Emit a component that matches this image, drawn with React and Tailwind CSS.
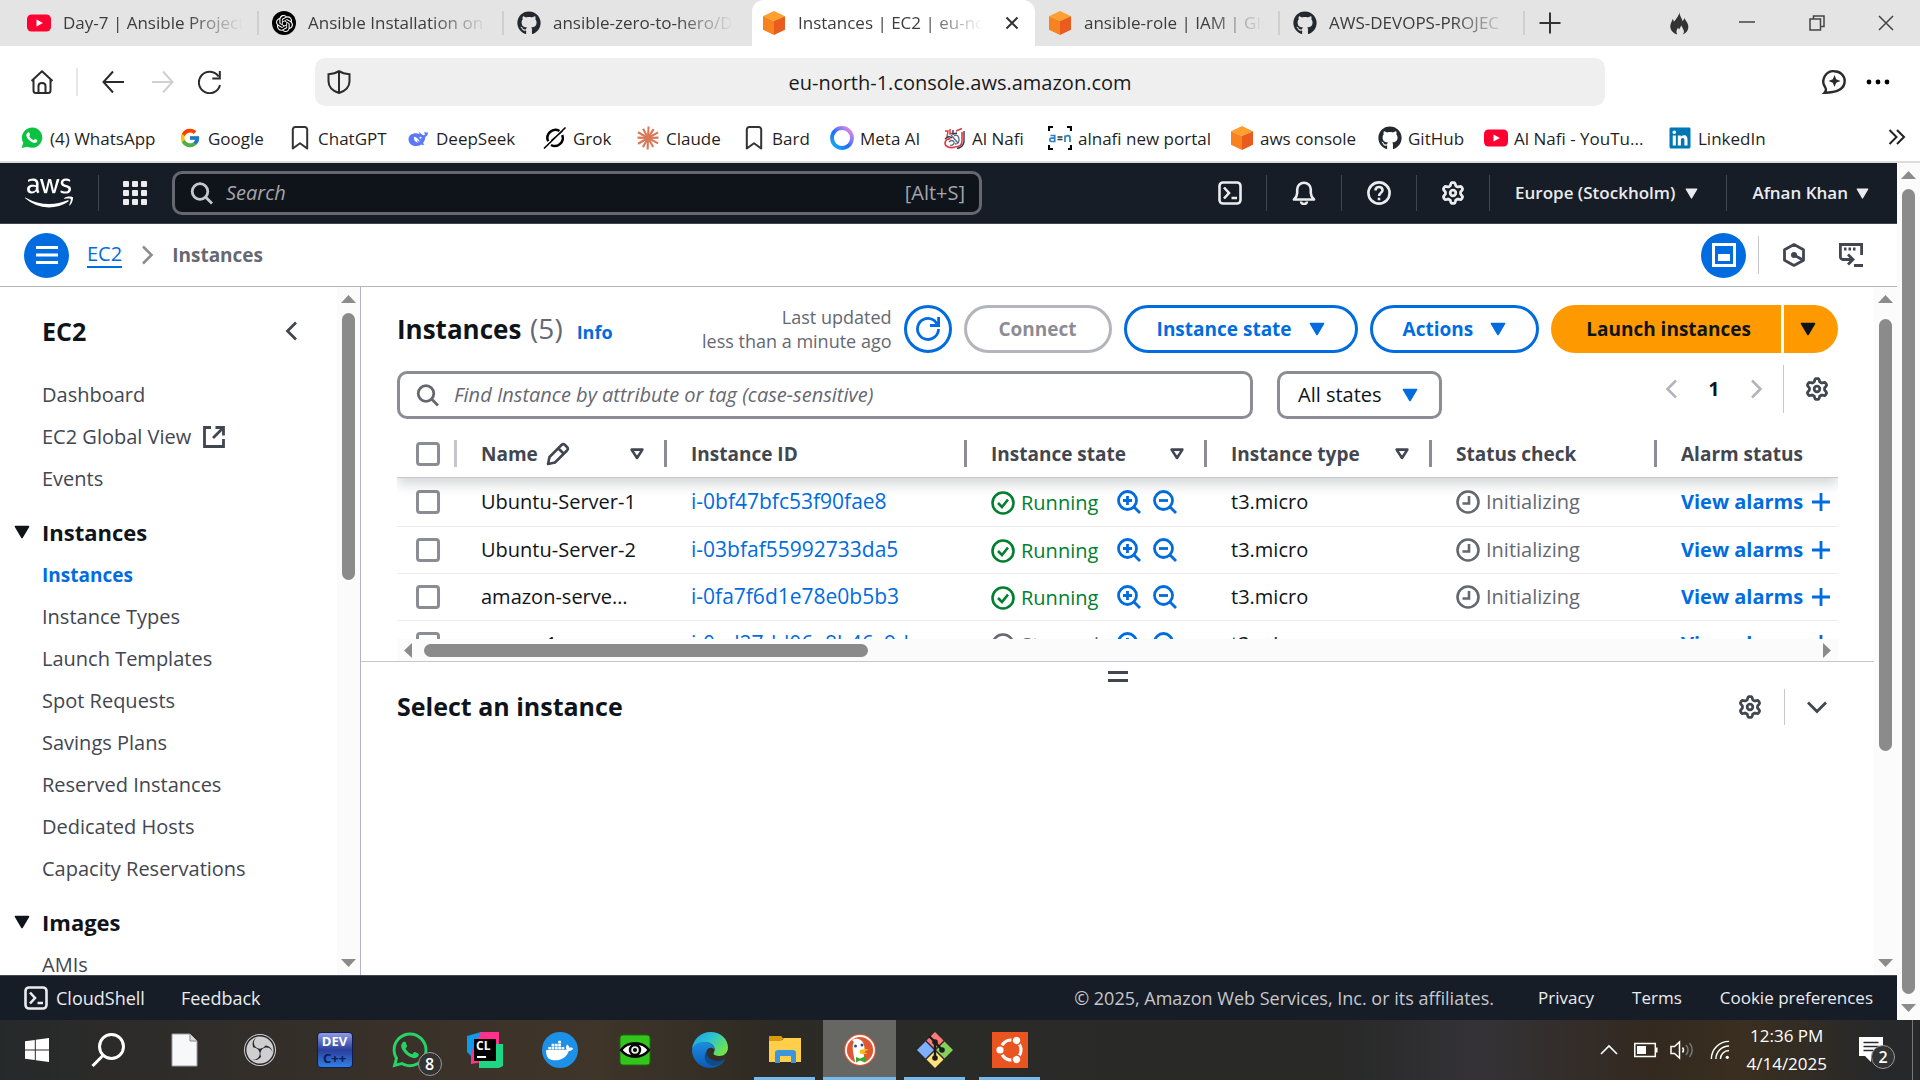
import React from "react";
import { FaGithub, FaWhatsapp, FaLinkedin } from "react-icons/fa";
import { FaAws } from "react-icons/fa6";
import { FcGoogle } from "react-icons/fc";
import { SiOpenai, SiDocker, SiObsstudio } from "react-icons/si";

/* ---------- generic glyphs ---------- */

const Stroke = ({ size = 24, w = 2, className = "", children, box = 24, label }) => (
  <svg width={size} height={size} viewBox={`0 0 ${box} ${box}`} fill="none" stroke="currentColor" strokeWidth={w} className={`shrink-0 ${className}`} aria-label={label} aria-hidden={label ? undefined : true}>
    {children}
  </svg>
);

const Caret = ({ size = 16, className = "" }) => (
  <svg width={size} height={size} viewBox="0 0 16 16" className={`shrink-0 ${className}`} aria-hidden="true">
    <path d="M1.5 2.5h13L8 13.5z" fill="currentColor" stroke="currentColor" strokeWidth="1.6" strokeLinejoin="round" />
  </svg>
);

const SortIcon = () => (
  <Stroke size={16} box={16} w={2.6} className="text-[#424650]">
    <path d="M2.6 3.6h10.8L8 12z" strokeLinejoin="round" />
  </Stroke>
);

const Magnifier = ({ className }) => (
  <Stroke className={className} w={2.8}>
    <circle cx="10" cy="10.5" r="7.8" />
    <path d="M15.5 16l6.5 6.5" />
  </Stroke>
);

const gearPath = (() => {
  let d = "";
  for (let i = 0; i < 72; i++) {
    const a = (i / 72) * Math.PI * 2;
    const r = 9 + 1.5 * Math.tanh(2 * Math.cos(6 * (a - Math.PI / 2)));
    d += `${i ? "L" : "M"}${(12 + r * Math.cos(a)).toFixed(2)} ${(12 + r * Math.sin(a)).toFixed(2)}`;
  }
  return d + "Z";
})();

const Gear = ({ className }) => (
  <Stroke className={className} w={2.8}>
    <path d={gearPath} strokeLinejoin="round" />
    <circle cx="12" cy="12" r="2.8" />
  </Stroke>
);

const ShellIcon = ({ className }) => (
  <Stroke className={className} w={2.6}>
    <rect x="1.5" y="1.5" width="21" height="21" rx="3.5" />
    <path d="M6 6.5l5 5.5-5 5.5M13.5 17h5.5" />
  </Stroke>
);

const Chevron = ({ d, size = 20, w = 2.6, className }) => (
  <Stroke size={size} box={20} w={w} className={className}>
    <path d={d} />
  </Stroke>
);
const LEFT = "M14 1.5L5.5 10l8.5 8.5";
const RIGHT = "M6 1.5L14.5 10 6 18.5";
const DOWN = "M1 5.5l9 9 9-9";

/* ---------- site logos ---------- */

const YouTubeLogo = () => (
  <svg width="24" height="24" viewBox="0 0 24 24" className="shrink-0" aria-hidden="true">
    <rect y="3.5" width="24" height="17" rx="4.5" fill="#ff0033" />
    <path d="M9.5 8.4l6.4 3.6-6.4 3.6z" fill="#fff" />
  </svg>
);

const CubeLogo = () => (
  <svg width="24" height="24" viewBox="0 0 24 24" className="shrink-0" aria-hidden="true">
    <path d="M12 0l11 5.2L12 10 1 5.2z" fill="#ff9f2e" />
    <path d="M1 5.2L12 10v14L1 18.8z" fill="#f78220" />
    <path d="M23 5.2L12 10v14l11-5.2z" fill="#e95c1e" />
  </svg>
);

const OpenAiLogo = () => (
  <span className="flex size-6 shrink-0 items-center justify-center rounded-full bg-black text-white">
    <SiOpenai size={17} />
  </span>
);

const WhatsAppLogo = () => (
  <svg width="24" height="24" viewBox="0 0 24 24" className="shrink-0" aria-hidden="true">
    <path d="M1.5 22l1.8-5.2A10.2 10.2 0 1 1 7.4 20.700z" fill="#0dc143" />
    <path d="M8.600 6.300c.5 0 .7.3 1.500 2.300.1.500-.9 1.300-.8 1.700 1 1.900 2.300 3 4.200 3.800.5.2 1.200-1.400 1.700-1.200 2 .9 2.300 1.100 2.300 1.400-.1 1.900-1.600 2.700-3 2.700-3.300-.3-7.800-4.200-8.200-7.700 0-1.500 1-3 2.300-3z" fill="#fff" />
  </svg>
);

const BookmarkGlyph = () => (
  <Stroke w={2} className="text-[#333]">
    <path d="M4.800 3.500a2.500 2.500 0 0 1 2.500-2.500h9.400a2.500 2.500 0 0 1 2.500 2.500v19l-7.200-5.300-7.200 5.300z" strokeLinejoin="round" />
  </Stroke>
);

const DeepSeekLogo = () => (
  <svg width="24" height="24" viewBox="0 0 24 24" className="shrink-0" aria-hidden="true">
    <path d="M22 6.200c-1.500.8-2.500.4-3.300-.8-.5 1.500-.3 2.400.5 3.400-1 .6-2 .5-3.200-.3-1.300-1-2-2.200-3.400-2.300.3.900.7 1.300 1.400 2C9 5.800 2.500 8 2.500 13.200c0 4 3.300 6.800 7.200 6.800 2.300 0 4-.5 5.500-1.500 1 .6 2 .5 3.300 0-.7-.3-1.300-.8-1.500-1.400 1.700-2 2.200-4 2.300-6.300 1.700-.6 2.600-2.100 2.700-4.600z" fill="#5b78f6" />
    <path d="M8 10.800c2.700.3 4.800 2.300 6 5.200-1.200-.3-2-.9-2.700-1.700-.3 1.300.2 1.900 1 2.500-3-.4-4.800-2.900-4.300-6z" fill="#fff" />
    <circle cx="14.500" cy="11.800" r="1" fill="#fff" />
  </svg>
);

const GrokLogo = () => (
  <Stroke w={2.500} className="text-black">
    <path d="M16.500 5A8 8 0 0 0 5.200 15.300M8 19A8 8 0 0 0 19.200 9" />
    <path d="M1 22.500L22.500 1.500M8.500 14.500L19.500 5" strokeWidth="1.600" />
  </Stroke>
);

const ClaudeLogo = () => (
  <svg width="24" height="24" viewBox="0 0 24 24" className="shrink-0" aria-hidden="true">
    {[3, 32, 61, 88, 118, 150, 182, 209, 240, 272, 300, 332].map((a, i) => (
      <path key={a} d={i % 2 ? "M12 12V1.500" : "M12 12V.5"} stroke="#d97757" strokeWidth="2.100" transform={`rotate(${a} 12 12)`} />
    ))}
  </svg>
);

const MetaLogo = () => (
  <svg width="24" height="24" viewBox="0 0 24 24" className="shrink-0" aria-hidden="true">
    <defs>
      <linearGradient id="meta-ring" x1="0" y1="1" x2="1" y2="0">
        <stop offset="0" stopColor="#12b5f5" />
        <stop offset=".45" stopColor="#1f6cf5" />
        <stop offset=".7" stopColor="#8d7cf7" />
        <stop offset="1" stopColor="#ff8ad0" />
      </linearGradient>
    </defs>
    <circle cx="12" cy="12" r="10" fill="none" stroke="url(#meta-ring)" strokeWidth="3.800" />
  </svg>
);

const AlNafiLogo = () => (
  <svg width="24" height="24" viewBox="0 0 24 24" className="shrink-0" fill="none" aria-hidden="true">
    <path d="M3 5h3l-1 6M8 3v5l3-1M14 5l6-2.500" stroke="#e0393e" strokeWidth="1.500" />
    <path d="M20 6v9c0 4-3 6-7 6-5 1.500-10 0-10-4 0-3 3-4.500 5.500-4" stroke="#e0393e" strokeWidth="1.600" />
    <path d="M22 5v11c-1 4-3 6-7 6.500M3 13c3-3 5-3 7-1M11 4v4l4-1" stroke="#2b3a5c" strokeWidth="1.400" />
    <path d="M12 10c3-2 5 0 5 4s-2 4-4 4M9 9l7 8M7 16c2-2 4-2 5 0s-2 4-4 3" stroke="#59657d" strokeWidth="1.300" />
  </svg>
);

const PortalLogo = () => (
  <svg width="24" height="24" viewBox="0 0 24 24" fill="none" className="shrink-0" aria-hidden="true">
    <path d="M1 5V1h4M19 1h4v4M1 19v4h4M23 19v4h-3" stroke="#000" strokeWidth="2.200" />
    <path d="M2.500 9.500h4.200v6H3.500a1.500 1.500 0 0 1 0-3.300h3M17 16V9.500M17 11.500c1.500-2.500 5-2.500 5 .5v4" stroke="#2f7fc1" strokeWidth="1.700" />
    <path d="M9.500 11h5M9.500 13.500h5" stroke="#333" strokeWidth="1.500" />
  </svg>
);

/* ---------- browser chrome ---------- */

const tabs = [
  { icon: <YouTubeLogo />, title: "Day-7 | Ansible Project" },
  { icon: <OpenAiLogo />, title: "Ansible Installation on" },
  { icon: <FaGithub size={24} className="shrink-0 text-[#24292f]" />, title: "ansible-zero-to-hero/D" },
  { icon: <CubeLogo />, title: "Instances | EC2 | eu-nort", active: true },
  { icon: <CubeLogo />, title: "ansible-role | IAM | Glo" },
  { icon: <FaGithub size={24} className="shrink-0 text-[#24292f]" />, title: "AWS-DEVOPS-PROJEC" },
];

function TabStrip() {
  return (
    <div className="flex h-[46px] shrink-0 items-center bg-[#e4e4e4] pl-3.5 text-[#3c3c3c]">
      {tabs.map((t, i) => (
        <button
          key={t.title}
          className={
            t.active
              ? "ml-[3px] flex h-full w-[283px] items-center gap-3 rounded-t-xl bg-white pr-4 pl-2.5"
              : "relative flex h-full w-[245px] items-center gap-3 pr-[16px] pl-[13px]"
          }
        >
          {t.icon}
          <span className="flex-1 overflow-hidden text-left text-[17px] whitespace-nowrap [mask-image:linear-gradient(to_right,black_68%,transparent_100%)]">
            {t.title}
          </span>
          {t.active && (
            <Stroke size={14} box={14} w={2} className="ml-2.5 text-[#333]">
              <path d="M1.500 1.500l11 11M12.500 1.500l-11 11" />
            </Stroke>
          )}
          {!t.active && i !== 2 && <span className="absolute right-0 h-6 w-0.5 bg-[#cfcfcf]" />}
        </button>
      ))}
      <button aria-label="New tab" className="ml-3.5">
        <Stroke size={22} box={22} className="text-[#333]"><path d="M11 .5v21M.5 11h21" /></Stroke>
      </button>
      <div className="ml-auto flex items-center">
        <button aria-label="Clear data" className="flex w-16 justify-center">
          <svg width="22" height="26" viewBox="0 0 24 26" aria-hidden="true">
            <path d="M13 0c-1.500 4 2.200 7.500 3 11 1-.8 1.500-2 1.500-3.500 3 4 5.500 7.500 4.500 11.500-.8 3.500-3 5.500-6 6.500 1.300-1.500 1.800-3.200 1-5-.7-1.800-2-3-2.500-5-1 2-1.200 3-2.500 4.500-.6-.6-.8-1.300-.8-2-1.800 2-2.700 4.500-1.200 7.500-4-1.300-7-4-7.500-8-.4-3.300 1.500-5.500 2.500-9 .8 1 1.200 1.800 1.500 3C9.500 8 12 5 13 0z" fill="#333" />
          </svg>
        </button>
        <button aria-label="Minimize" className="flex w-[72px] justify-center">
          <Stroke size={16} box={16} w={1.500} className="text-[#444]"><path d="M0 7h16" /></Stroke>
        </button>
        <button aria-label="Restore" className="flex w-[68px] justify-center">
          <Stroke size={16} box={16} w={1.500} className="text-[#444]"><path d="M1 4h10.500v11H1zM4.500 4V1H15v10.500h-3.500" /></Stroke>
        </button>
        <button aria-label="Close" className="flex w-[69px] justify-center">
          <Stroke size={16} box={16} w={1.500} className="text-[#444]"><path d="M1 1l14 14M15 1L1 15" /></Stroke>
        </button>
      </div>
    </div>
  );
}

function AddressBar() {
  return (
    <div className="flex h-[72px] shrink-0 items-center bg-white text-[#2b2b2b]">
      <div className="flex w-[315px] shrink-0 items-center pl-[30px]">
        <button aria-label="Home">
          <Stroke><path d="M1.500 11L12 1.200 22.500 11M3.500 9.500v11a2.500 2.500 0 0 0 2.500 2.500h12a2.500 2.500 0 0 0 2.500-2.500v-11M8.500 22.500V16c0-2 1-3 3.500-3s3.500 1 3.500 3v6.500" strokeLinejoin="round" /></Stroke>
        </button>
        <span className="mr-6 ml-[22px] h-7 w-0.5 bg-[#e6e6e6]" />
        <button aria-label="Back">
          <Stroke><path d="M22 12H2M11 1.500L1.500 12l9.500 10.500" /></Stroke>
        </button>
        <button aria-label="Forward" className="ml-6 text-[#d0d0d0]">
          <Stroke><path d="M2 12h20M13 1.500l9.500 10.500L13 22.500" /></Stroke>
        </button>
        <button aria-label="Reload" className="ml-6">
          <Stroke><path d="M20.500 6.500A10.700 10.700 0 1 0 22 15M21.800 1v7.500h-7.500" /></Stroke>
        </button>
      </div>
      <div className="flex h-12 flex-1 items-center rounded-[10px] bg-[#efefef] pr-9 pl-3">
        <Stroke><path d="M12 1.200c3 2 6.500 2.800 10.500 3v7C22.500 17 18 21 12 23 6 21 1.500 17 1.500 11.200v-7C5.500 4 9 3.200 12 1.200zM12 1.200V23" /></Stroke>
        <input aria-label="Address" defaultValue="eu-north-1.console.aws.amazon.com" className="w-full bg-transparent pt-0.5 text-center text-[20px] text-[#1a1a1a] outline-none" />
      </div>
      <div className="flex w-[315px] shrink-0 items-center justify-end gap-5 pr-[30px]">
        <button aria-label="Chat">
          <Stroke w={2.400}>
            <path d="M12.500 1.200a10.300 9.800 0 0 1 10.200 9.800C22.700 18 16 22.500 2.500 22.800c1.800-2 2-3.300.8-5.300A10.300 10.300 0 0 1 12.500 1.200z" />
            <path d="M12.500 5l1.700 4.300 4.300 1.700-4.300 1.700-1.700 4.300-1.700-4.300L6.500 11l4.300-1.700z" fill="currentColor" stroke="none" />
          </Stroke>
        </button>
        <button aria-label="More">
          <svg width="24" height="6" viewBox="0 0 24 6" aria-hidden="true"><circle cx="3" cy="3" r="2.400" /><circle cx="12" cy="3" r="2.400" /><circle cx="21" cy="3" r="2.400" /></svg>
        </button>
      </div>
    </div>
  );
}

const bookmarks = [
  [<WhatsAppLogo />, "(4) WhatsApp", "w-[158px]"],
  [<span className="flex w-6 shrink-0 justify-center"><FcGoogle size={22} /></span>, "Google", "w-[110px]"],
  [<BookmarkGlyph />, "ChatGPT", "w-[118px]"],
  [<DeepSeekLogo />, "DeepSeek", "w-[137px]"],
  [<GrokLogo />, "Grok", "w-[93px]"],
  [<ClaudeLogo />, "Claude", "w-[106px]"],
  [<BookmarkGlyph />, "Bard", "w-[88px]"],
  [<MetaLogo />, "Meta AI", "w-[112px]"],
  [<AlNafiLogo />, "Al Nafi", "w-[106px]"],
  [<PortalLogo />, "alnafi new portal", "w-[182px]"],
  [<CubeLogo />, "aws console", "w-[148px]"],
  [<FaGithub size={24} className="shrink-0 text-[#24292f]" />, "GitHub", "w-[106px]"],
  [<YouTubeLogo />, "Al Nafi - YouTu...", "w-[184px]"],
  [<span className="flex w-6 shrink-0 justify-center"><FaLinkedin size={24} className="text-[#0077b5]" /></span>, "LinkedIn", "w-[106px]"],
];

function BookmarkBar() {
  return (
    <nav aria-label="Bookmarks" className="flex h-[45px] shrink-0 items-start border-b-2 border-[#dcdcdc] bg-white pt-2 pl-5">
      {bookmarks.map(([icon, label, width]) => (
        <a key={label} href="#" className={`flex h-6 items-center gap-1.5 text-[17px] whitespace-nowrap text-[#1f1f1f] ${width}`}>
          {icon}
          <span className="pt-0.5">{label}</span>
        </a>
      ))}
      <button aria-label="More bookmarks" className="mt-0.5 mr-3.5 ml-auto">
        <Stroke size={18} box={18} className="text-[#222]"><path d="M1.500 2l7 7-7 7M9 2l7 7-7 7" /></Stroke>
      </button>
    </nav>
  );
}

/* ---------- AWS console ---------- */

const HSep = () => <span className="block h-9 w-px shrink-0 bg-[#424650]" />;

function AwsHeader() {
  return (
    <header className="flex h-[61px] shrink-0 items-center border-b border-[#424650] bg-[#161d26] text-[17px] font-semibold text-[#ebebf0]">
      <button aria-label="AWS home" className="mr-[25px] ml-[25px]"><FaAws size={48} className="text-white" /></button>
      <HSep />
      <button aria-label="Services" className="ml-6">
        <svg width="24" height="24" viewBox="0 0 24 24" fill="currentColor" aria-hidden="true">
          {[0, 9, 18].map((y) => [0, 9, 18].map((x) => <rect key={`${x}-${y}`} x={x} y={y} width="6" height="6" rx="1" />))}
        </svg>
      </button>
      <div className="ml-[25px] flex h-11 w-full max-w-[810px] items-center gap-3 rounded-[10px] border-[3px] border-[#656871] bg-[#0f141a] pr-3.5 pl-[15px]">
        <Magnifier className="text-[#c6c6cd]" />
        <input type="search" aria-label="Search" placeholder="Search" className="min-w-0 flex-1 bg-transparent text-[20px] font-normal outline-none placeholder:text-[#a4a4ad] placeholder:italic" />
        <span className="text-[20px] font-normal text-[#a4a4ad]">[Alt+S]</span>
      </div>
      <div className="ml-auto flex h-full items-center">
        <button aria-label="CloudShell" className="px-6"><ShellIcon /></button>
        <HSep />
        <button aria-label="Notifications" className="px-[25px]">
          <Stroke w={2.600}><path d="M2 18.500h20c-2-2-3.200-3.800-3.200-6.500V8.500a6.800 6.800 0 0 0-13.600 0V12c0 2.700-1.200 4.500-3.200 6.500zM9 20.500a3 2.500 0 0 0 6 0" strokeLinejoin="round" /></Stroke>
        </button>
        <HSep />
        <button aria-label="Help" className="px-[25px]">
          <Stroke w={2.600}><circle cx="12" cy="12" r="10.600" /><path d="M8.500 9.500C8.500 7 10 6 12 6s3.500 1.200 3.500 3.200C15.500 11.800 12 12 12 15M12 16.800v2.400" /></Stroke>
        </button>
        <HSep />
        <button aria-label="Settings" className="px-6"><Gear /></button>
        <HSep />
        <button className="flex items-center gap-2.5 pr-7 pl-[25px] whitespace-nowrap">Europe (Stockholm) <Caret size={13} /></button>
        <HSep />
        <button className="flex items-center gap-2 pr-7 pl-[25px] whitespace-nowrap">Afnan Khan <Caret size={13} /></button>
      </div>
    </header>
  );
}

function Breadcrumbs() {
  return (
    <div className="flex h-[63px] shrink-0 items-center border-b border-[#b4b4bb] bg-white px-6">
      <button aria-label="Open navigation" className="flex size-[45px] items-center justify-center rounded-full bg-[#006ce0] text-white">
        <Stroke size={22} box={22} w={3}><path d="M0 3.500h22M0 11h22M0 18.500h22" /></Stroke>
      </button>
      <a href="#" className="ml-[18px] border-b-2 border-[#006ce0] text-[20px] leading-6 text-[#006ce0]">EC2</a>
      <Chevron d={RIGHT} className="mx-[15px] text-[#8c8c94]" />
      <span className="text-[19px] font-bold text-[#656871]">Instances</span>
      <div className="ml-auto flex items-center">
        <button aria-label="Split panel" className="flex size-[45px] items-center justify-center rounded-full bg-[#006ce0] text-white">
          <Stroke w={3}><rect x="1.500" y="1.500" width="21" height="21" /><path d="M6 11h12v7H6z" fill="currentColor" stroke="none" /></Stroke>
        </button>
        <span className="ml-3 h-[38px] w-px bg-[#c6c6cd]" />
        <button aria-label="Amazon Q" className="ml-[23px] text-[#424650]">
          <Stroke w={2.800}><path d="M12 1.600l9.500 5.200v10.400L12 22.400l-9.500-5.200V6.800z" strokeLinejoin="round" /><circle cx="12" cy="12" r="3" fill="currentColor" stroke="none" /><path d="M12 12l8 4.500" /></Stroke>
        </button>
        <button aria-label="Shell panel" className="mr-2.5 ml-[33px] text-[#424650]">
          <Stroke w={2.800}>
            <path d="M7 16.500H4a2.500 2.500 0 0 1-2.600-2.500V1.500h21.200V12M15 22.500h9M5 16.500h8M9 11.500l5 5-5 5" />
            <path d="M5 6h2.500M9.500 6H12M14 6h2.500" />
          </Stroke>
        </button>
      </div>
    </div>
  );
}

const ScrollBar = ({ children, className = "" }) => (
  <div aria-hidden="true" className={`flex w-[23px] shrink-0 flex-col items-center bg-[#fbfbfb] py-2 ${className}`}>
    <svg width="15" height="8" viewBox="0 0 15 8" className="shrink-0"><path d="M7.500 0L15 8H0z" fill="#8b8b8b" /></svg>
    <div className="flex min-h-0 w-full flex-1 justify-center pt-2.5 pb-2.5">{children}</div>
    <svg width="15" height="8" viewBox="0 0 15 8" className="shrink-0"><path d="M7.500 8L15 0H0z" fill="#8b8b8b" /></svg>
  </div>
);

const ExternalIcon = () => (
  <Stroke size={22} box={22} w={2.800} className="text-[#424650]">
    <path d="M8 1.500H1.500v19h19V13M12.500 1.500h8v8M20.500 1.500L10 12" />
  </Stroke>
);

const NavItem = ({ children, active }) => (
  <li className={`flex h-[42px] items-center gap-3 ${active ? "font-bold text-[#006ce0]" : "text-[#424650]"}`}>
    <a href="#" className={active ? "text-[19px]" : "text-[20px]"}>{children}</a>
    {children === "EC2 Global View" && <ExternalIcon />}
  </li>
);

const NavSection = ({ title, items, active }) => (
  <section>
    <h3 className="flex h-11 items-center gap-3 pl-3.5 text-[22px] font-bold text-[#0f141a]">
      <Caret size={16} />
      {title}
    </h3>
    <ul className="pl-[42px]">
      {items.map((t) => <NavItem key={t} active={t === active}>{t}</NavItem>)}
    </ul>
  </section>
);

function Sidebar() {
  return (
    <aside className="flex w-[361px] shrink-0 border-r border-[#b4b4bb] bg-white">
      <nav aria-label="EC2" className="min-h-0 flex-1 overflow-hidden">
        <div className="flex items-center justify-between pt-[26px] pr-[35px] pb-[25px] pl-[42px]">
          <h2 className="text-[25px] leading-9 font-bold text-[#0f141a]">EC2</h2>
          <button aria-label="Close navigation"><Chevron d={LEFT} className="text-[#424650]" w={2.800} /></button>
        </div>
        <div className="flex flex-col gap-2.5">
          <ul className="pl-[42px]">
            {["Dashboard", "EC2 Global View", "Events"].map((t) => <NavItem key={t}>{t}</NavItem>)}
          </ul>
          <NavSection
            title="Instances"
            active="Instances"
            items={["Instances", "Instance Types", "Launch Templates", "Spot Requests", "Savings Plans", "Reserved Instances", "Dedicated Hosts", "Capacity Reservations"]}
          />
          <NavSection title="Images" items={["AMIs"]} />
        </div>
      </nav>
      <ScrollBar>
        <span className="h-[42%] w-[13px] rounded-full bg-[#8b8b8b]" />
      </ScrollBar>
    </aside>
  );
}

const OutlineButton = ({ children, disabled, caret }) => (
  <button
    disabled={disabled}
    className={`flex h-12 items-center gap-[17px] rounded-full border-[3px] text-[19px] font-bold whitespace-nowrap ${disabled ? "border-[#b4b4bb] px-8 text-[#8c8c94]" : "border-[#006ce0] px-[30px] text-[#006ce0]"}`}
  >
    {children}
    {caret && <Caret size={16} />}
  </button>
);

const PanelSep = () => <span className="block h-12 w-px bg-[#c6c6cd]" />;

function InstancesHeader() {
  return (
    <>
      <div className="flex items-center justify-between pt-[18px]">
        <div className="-mt-0.5 flex items-baseline">
          <h1 className="text-[26px] leading-9 font-bold text-[#0f141a]">
            Instances <span className="ml-0.5 text-[28px] font-normal text-[#656871]">(5)</span>
          </h1>
          <a href="#" className="ml-3.5 text-[18px] font-bold text-[#006ce0]">Info</a>
        </div>
        <div className="flex items-center gap-3">
          <p className="text-right text-[18px] leading-6 text-[#656871]">Last updated<br />less than a minute ago</p>
          <button aria-label="Refresh" className="flex size-12 items-center justify-center rounded-full border-[3px] border-[#006ce0] text-[#006ce0]">
            <Stroke w={2.800}><path d="M22.500 12a10.500 10.500 0 1 1-4-8.300L22 8M22.600 0v8.500H14" /></Stroke>
          </button>
          <OutlineButton disabled>Connect</OutlineButton>
          <OutlineButton caret>Instance state</OutlineButton>
          <OutlineButton caret>Actions</OutlineButton>
          <div className="flex gap-[3px] text-[19px] font-bold text-[#0f141a]">
            <button className="h-12 rounded-l-full bg-[#ff9900] pr-[30px] pl-[35px] whitespace-nowrap">Launch instances</button>
            <button aria-label="More launch options" className="flex h-12 w-[54px] items-center rounded-r-full bg-[#ff9900] pl-4"><Caret size={16} /></button>
          </div>
        </div>
      </div>
      <div className="mt-[18px] flex items-center">
        <div className="flex h-12 w-full max-w-[856px] items-center gap-3.5 rounded-[10px] border-[3px] border-[#8c8c94] px-4">
          <Magnifier className="text-[#656871]" />
          <input type="search" aria-label="Find Instance" placeholder="Find Instance by attribute or tag (case-sensitive)" className="w-full bg-transparent text-[20px] text-[#0f141a] outline-none placeholder:text-[#656871] placeholder:italic" />
        </div>
        <div className="relative ml-6 shrink-0">
          <select aria-label="Instance state filter" className="h-12 w-[165px] appearance-none rounded-[10px] border-[3px] border-[#8c8c94] bg-white pl-[18px] text-[20px] text-[#0f141a]">
            <option>All states</option>
          </select>
          <Caret size={16} className="pointer-events-none absolute top-4 right-6 text-[#006ce0]" />
        </div>
        <div className="-mt-3 ml-auto flex items-center pr-[9px]">
          <button aria-label="Previous page"><Chevron d={LEFT} className="text-[#b4b4bb]" /></button>
          <button aria-current="page" className="mx-[22px] w-5 text-[19px] font-bold text-[#0f141a]">1</button>
          <button aria-label="Next page" className="mr-[17px]"><Chevron d={RIGHT} className="text-[#b4b4bb]" /></button>
          <PanelSep />
          <button aria-label="Preferences" className="ml-[21px]"><Gear className="text-[#424650]" /></button>
        </div>
      </div>
    </>
  );
}

const CheckCircle = () => (
  <Stroke w={2.600} className="text-[#00802f]"><circle cx="12" cy="12" r="10.500" /><path d="M7 12l4 4 6-7.500" /></Stroke>
);
const StopCircle = () => (
  <Stroke w={2.600}><circle cx="12" cy="12" r="10.500" /><path d="M7 12h10" /></Stroke>
);
const ClockCircle = () => (
  <Stroke w={2.600}><circle cx="12" cy="12" r="10.500" /><path d="M13 6v7.500H6.500" /></Stroke>
);
const Zoom = ({ d, label }) => (
  <button aria-label={label} className="text-[#006ce0]">
    <Stroke w={2.800}><circle cx="10.500" cy="10.500" r="9" /><path d="M17 17l6 6" /><path d={d} /></Stroke>
  </button>
);

const rows = [
  { name: "Ubuntu-Server-1", id: "i-0bf47bfc53f90fae8", state: "Running", check: "Initializing" },
  { name: "Ubuntu-Server-2", id: "i-03bfaf55992733da5", state: "Running", check: "Initializing" },
  { name: "amazon-serve…", id: "i-0fa7f6d1e78e0b5b3", state: "Running", check: "Initializing" },
  { name: "server-1", id: "i-0ad27dd06a8b46c9d", state: "Stopped", check: "" },
];

const columns = [
  { title: "Name", width: "w-[210px]", edit: true, sort: true },
  { title: "Instance ID", width: "w-[300px]" },
  { title: "Instance state", width: "w-[240px]", sort: true },
  { title: "Instance type", width: "w-[225px]", sort: true },
  { title: "Status check", width: "w-[225px]" },
  { title: "Alarm status", last: true },
];

const Check = ({ label }) => (
  <input type="checkbox" aria-label={label} className="block size-6 appearance-none rounded-[4px] border-[3px] border-[#8c8c94] bg-white checked:bg-[#006ce0]" />
);

function InstancesTable() {
  return (
    <div className="mt-[11px] h-[209px] overflow-hidden">
      <table className="w-full table-fixed border-separate border-spacing-0 text-left text-[20px] text-[#0f141a]">
        <thead className="relative shadow-[0_6px_12px_rgba(0,28,36,0.18)]">
          <tr className="h-12">
            <th className="w-[60px] border-b border-[#c6c6cd] p-0">
              <div className="flex h-[27px] items-center justify-between pl-[19px]">
                <Check label="Select all instances" />
                <span className="h-[27px] w-[3px] bg-[#c6c6cd]" />
              </div>
            </th>
            {columns.map((c) => (
              <th key={c.title} className={`border-b border-[#c6c6cd] p-0 text-[19px] font-bold text-[#424650] ${c.width || ""}`}>
                <div className="flex h-[27px] items-center pl-6 whitespace-nowrap">
                  <span className="pt-0.5">{c.title}</span>
                  {c.edit && (
                    <Stroke w={2.600} className="ml-2">
                      <path d="M2 22l1.500-7L15.500 3a2.500 2.500 0 0 1 3.500 0l2 2a2.500 2.500 0 0 1 0 3.500L9 20.500zM12.500 6.500l5 5" strokeLinejoin="round" />
                    </Stroke>
                  )}
                  <span className="ml-auto flex items-center gap-[19px]">
                    {c.sort && <SortIcon />}
                    {!c.last && <span className="h-[27px] w-[3px] bg-[#8c8c94]" />}
                  </span>
                </div>
              </th>
            ))}
          </tr>
        </thead>
        <tbody className="[&_td]:border-b [&_td]:border-[#ebebf0] [&_td]:p-0 [&_td]:whitespace-nowrap">
          {rows.map((r, i) => (
            <tr key={r.id} className={i === 0 ? "h-[49px]" : "h-[47px]"}>
              <td><div className="pl-[19px]"><Check label={`Select ${r.name}`} /></div></td>
              <td><div className="pl-6">{r.name}</div></td>
              <td><a href="#" className="pl-6 text-[21px] text-[#006ce0]">{r.id}</a></td>
              <td>
                <div className="flex items-center pl-6">
                  <span className={`flex w-[126px] items-center gap-1.5 pt-0.5 ${r.state === "Running" ? "text-[#00802f]" : "text-[#656871]"}`}>
                    {r.state === "Running" ? <CheckCircle /> : <StopCircle />}
                    {r.state}
                  </span>
                  <span className="flex gap-3">
                    <Zoom label="Filter in" d="M10.500 6v9M6 10.500h9" />
                    <Zoom label="Filter out" d="M6 10.500h9" />
                  </span>
                </div>
              </td>
              <td><div className="pl-6">t3.micro</div></td>
              <td>
                {r.check && <div className="flex items-center gap-1.5 pl-6 text-[#656871]"><ClockCircle />{r.check}</div>}
              </td>
              <td>
                <a href="#" className="flex items-center gap-2 pl-6 text-[20px] font-bold text-[#006ce0]">
                  View alarms
                  <Stroke size={20} box={20} w={2.800}><path d="M10 1v18M1 10h18" /></Stroke>
                </a>
              </td>
            </tr>
          ))}
        </tbody>
      </table>
    </div>
  );
}

function SplitPanel() {
  return (
    <section className="flex-1 border-t border-[#c6c6cd] bg-white">
      <button aria-label="Resize panel" className="mx-auto mt-[9px] block text-[#424650]">
        <svg width="20" height="12" viewBox="0 0 20 12" className="block" aria-hidden="true"><path d="M0 0h20v3H0zM0 8h20v3H0z" fill="currentColor" /></svg>
      </button>
      <div className="flex items-center justify-between pt-[3px] pr-[47px] pl-9">
        <h2 className="pt-0.5 text-[25px] font-bold text-[#0f141a]">Select an instance</h2>
        <div className="mt-0.5 flex items-center text-[#424650]">
          <button aria-label="Panel preferences"><Gear /></button>
          <span className="mx-[22px] h-9 w-px bg-[#c6c6cd]" />
          <button aria-label="Collapse panel"><Chevron d={DOWN} w={2.800} /></button>
        </div>
      </div>
    </section>
  );
}

function Main() {
  return (
    <main className="flex min-w-0 flex-1 bg-white">
      <div className="flex min-w-0 flex-1 flex-col">
        <div className="pr-9 pl-9">
          <InstancesHeader />
          <InstancesTable />
          <div aria-hidden="true" className="flex h-[22px] items-center bg-[#fbfbfb] px-[7px]">
            <svg width="8" height="15" viewBox="0 0 8 15"><path d="M8 0v15L0 7.500z" fill="#8b8b8b" /></svg>
            <div className="flex-1 px-3"><span className="block h-[13px] w-[32%] rounded-full bg-[#8b8b8b]" /></div>
            <svg width="8" height="15" viewBox="0 0 8 15"><path d="M0 0v15l8-7.500z" fill="#8b8b8b" /></svg>
          </div>
        </div>
        <SplitPanel />
      </div>
      <ScrollBar>
        <span className="mt-1.5 h-[68%] w-[13px] rounded-full bg-[#8b8b8b]" />
      </ScrollBar>
    </main>
  );
}

function Footer() {
  return (
    <footer className="flex h-[45px] shrink-0 items-center border-t border-[#424650] bg-[#161d26] pr-6 pl-6 text-[17px] font-medium whitespace-nowrap text-[#ebebf0]">
      <button className="flex items-center gap-2 text-[18px]"><ShellIcon />CloudShell</button>
      <button className="ml-9 text-[18px]">Feedback</button>
      <span className="mr-11 ml-auto text-[18px] font-normal text-[#c6c6cd]">© 2025, Amazon Web Services, Inc. or its affiliates.</span>
      <a href="#" className="mr-[38px]">Privacy</a>
      <a href="#" className="mr-[38px]">Terms</a>
      <a href="#">Cookie preferences</a>
    </footer>
  );
}

/* ---------- Windows taskbar ---------- */

const Svg36 = ({ children }) => (
  <svg width="36" height="36" viewBox="0 0 36 36" fill="none" aria-hidden="true">{children}</svg>
);

const CountBadge = ({ children }) => (
  <span className="absolute -right-3 -bottom-1.5 flex size-6 items-center justify-center rounded-full border border-[#9a9a9a] bg-[#333] text-[16px] font-semibold text-white">
    {children}
  </span>
);

const apps = [
  ["Document", <Svg36><path d="M5 2h18l7 7v25H5z" fill="#f6f8fa" stroke="#9aa0a6" /><path d="M23 2v7h7" fill="#d7dce0" stroke="#888" /></Svg36>],
  ["OBS Studio", <span className="flex size-8 items-center justify-center rounded-full bg-[#cfcfcf]"><SiObsstudio size={30} className="text-[#26242a]" /></span>],
  ["Dev-C++", (
    <span className="flex size-9 flex-col items-center justify-center rounded-sm border border-[#101c50] bg-linear-to-b from-[#8f9be4] via-[#2a3f9c] to-[#2f80e8] text-[13px] font-bold">
      <span className="leading-[17px] text-white">DEV</span>
      <span className="leading-[17px] text-[#0b1c55]">C++</span>
    </span>
  )],
  ["WhatsApp", <span className="relative"><FaWhatsapp size={40} className="text-[#25d366]" /><CountBadge>8</CountBadge></span>],
  ["CLion", (
    <Svg36>
      <path d="M0 4l14-4 6 10L6 26 0 20z" fill="#0d9bea" />
      <path d="M14 0h18v12L16 30l-12 2 0-12z" fill="#ff318c" />
      <path d="M24 12h12v22l-4 2H12V28z" fill="#1ed683" />
      <rect x="7" y="7" width="22" height="22" fill="#000" />
      <text x="9" y="18" fontSize="12" fontWeight="700" fill="#fff" fontFamily="Open Sans, sans-serif">CL</text>
      <path d="M10 25h9" stroke="#fff" strokeWidth="2" />
    </Svg36>
  )],
  ["Docker", <span className="flex size-9 items-center justify-center rounded-full bg-[#1d91e8]"><SiDocker size={27} className="text-white" /></span>],
  ["Viewer", (
    <Svg36>
      <rect x="3" y="3" width="30" height="30" rx="3" fill="#34c51c" stroke="#16700c" />
      <path d="M4 18c7-9 21-9 28 0-7 9-21 9-28 0z" fill="#fff" stroke="#000" strokeWidth="2.600" />
      <circle cx="18" cy="18" r="5" fill="#eee" stroke="#000" strokeWidth="2.400" />
      <circle cx="18" cy="18" r="2" fill="#000" />
    </Svg36>
  )],
  ["Edge", (
    <svg width="36" height="36" viewBox="0 0 36 36" fill="none" aria-hidden="true">
      <defs>
        <linearGradient id="edge-top" x1="0" y1="0" x2="1" y2=".6"><stop offset="0" stopColor="#1b9de2" /><stop offset=".5" stopColor="#2cc3d2" /><stop offset="1" stopColor="#6fe34b" /></linearGradient>
        <linearGradient id="edge-low" x1="0" y1="0" x2="0" y2="1"><stop offset="0" stopColor="#1b8fe0" /><stop offset="1" stopColor="#0c59b4" /></linearGradient>
      </defs>
      <path d="M0 17C1 7 9 0 18.500 0 29 0 36 7.500 36 15.500c0 5-3.800 8.500-8.500 8.500-3.500 0-6-1-6-2.500 0-1 1.200-1.600 1.200-4 0-4-4-7.200-9.200-7.200C8 10.300 3 13 0 17z" fill="url(#edge-top)" />
      <path d="M0 18c1-5 6-8 11.500-8 6.500 0 11 3.500 11 7.500-2-2.500-6.500-2.500-8 1.500C12.500 25 18 30.500 25 30c3 0 6-1.500 8-3-2.500 5.500-8.500 9-15 9C8 36 0 28 0 18z" fill="url(#edge-low)" />
      <path d="M14 20c-3.500 6 0 12 6 13.500 5 1 10-1.500 13-6.500-9 4.500-17.500.5-19-7z" fill="#114a8b" />
    </svg>
  )],
  ["File Explorer", (
    <Svg36>
      <path d="M2 4h12l3 3h-2v6H2z" fill="#d99a0b" />
      <path d="M2 9h12l3-3h17v24H2z" fill="#ffcf4b" />
      <path d="M8 31V21a3 3 0 0 1 3-3h15a3 3 0 0 1 3 3v10h-5v-7H13v7z" fill="#3d96dd" />
    </Svg36>
  ), "w-[61px]"],
  ["DuckDuckGo", (
    <Svg36>
      <circle cx="18" cy="18" r="16" fill="#de5833" />
      <circle cx="18" cy="18" r="14" stroke="#fff" strokeWidth="1.800" />
      <path d="M10 8c5-3 11-.5 12 5l1 6c-2 3-1 7 0 12-3 1.300-7 1.300-9.500.3C12 25 9 14 12 10z" fill="#fff" />
      <circle cx="13.500" cy="14" r="1.500" fill="#2d4f8e" /><circle cx="20" cy="13" r="1.500" fill="#2d4f8e" />
      <path d="M18 18c4-1 8-1.500 8-.5s-4 1.500-4 2.500 4 .5 3 1.500-7 1-7.500-1z" fill="#fdb90e" />
      <path d="M14 25l4 1.500 5-2v6l-5-2-4 2z" fill="#3ca82b" />
    </Svg36>
  ), "w-full", true],
  ["Git", (
    <Svg36>
      <path d="M18 0l8.500 8.500L18 17 9.500 8.500z" fill="#ff7b7b" />
      <path d="M27.500 9.500L36 18l-8.500 8.500L19 18z" fill="#85cf5b" />
      <path d="M8.500 9.500L17 18l-8.500 8.500L0 18z" fill="#7fb0ff" />
      <path d="M18 19l8.500 8.500L18 36l-8.500-8.500z" fill="#ffe27a" />
      <path d="M12 4l6 6v16M18 10l7 8" stroke="#1c1c1c" strokeWidth="2.400" />
      <circle cx="18" cy="10" r="2.800" fill="#1c1c1c" /><circle cx="25" cy="18" r="2.800" fill="#1c1c1c" /><circle cx="18" cy="26" r="2.800" fill="#1c1c1c" />
    </Svg36>
  ), "w-[61px]"],
  ["Ubuntu", (
    <Svg36>
      <path d="M0 0h36v36H0z" fill="#e95420" />
      <circle cx="19" cy="18" r="10" stroke="#fff" strokeWidth="3" />
      {[180, 300, 60].map((a) => (
        <circle key={a} cx="30" cy="18" r="4.400" fill="#fff" stroke="#e95420" strokeWidth="1.600" transform={`rotate(${a} 19 18)`} />
      ))}
    </Svg36>
  ), "w-[61px]"],
];

function Taskbar() {
  return (
    <div className="flex h-[60px] shrink-0 items-center bg-linear-to-r from-[#26292a] via-[#2a2a27] to-[#26282a] text-white">
      <div className="flex h-full w-full items-center bg-[linear-gradient(to_right,transparent_0%,#3a3129_22%,#3f3529_31%,#2e2b24_40%,transparent_46%,transparent_70%,#343237_77%,#33291f_86%,#3a2f20_91%,transparent_98%)]">
        <button aria-label="Start" className="flex h-full w-[73px] items-center justify-center">
          <svg width="24" height="24" viewBox="0 0 24 24" fill="#fff" aria-hidden="true"><path d="M0 3.300l9.800-1.300v9.500H0zM10.800 1.800L24 0v11.500H10.800zM0 12.500h9.800V22L0 20.700zM10.800 12.500H24V24l-13.200-1.800z" /></svg>
        </button>
        <button aria-label="Search" className="flex h-full w-[75px] items-center justify-center pr-1.5">
          <Stroke size={34} box={34} w={3}><circle cx="20.500" cy="13.500" r="12" /><path d="M12.500 22L1.500 33" /></Stroke>
        </button>
        {apps.map(([name, icon, bar, active]) => (
          <button key={name} aria-label={name} className={`relative mr-0.5 flex h-full w-[73px] items-center justify-center ${active ? "bg-[#666663]" : ""}`}>
            {icon}
            {bar && <span className={`absolute bottom-0 h-[3px] bg-[#76b9ed] ${bar}`} />}
          </button>
        ))}
        <div className="ml-auto flex items-center">
          <button aria-label="Show hidden icons"><Stroke size={18} box={18} w={1.600}><path d="M1 13l8-8 8 8" /></Stroke></button>
          <svg width="24" height="16" viewBox="0 0 24 16" className="ml-4" fill="none" aria-label="Battery"><path d="M.8 1.500h20.500v13H.8zM22.800 5.500v5" stroke="#fff" strokeWidth="1.500" /><path d="M3 4h9v8H3z" fill="#fff" /></svg>
          <Stroke size={24} w={1.500} className="ml-3" label="Volume"><path d="M1 8.500h3.500L9.500 4v16l-5-4.500H1z" /><path d="M12.500 9.500c1.200 1.500 1.200 3.500 0 5" /><path d="M16 7c2.500 3 2.500 7 0 10M19.500 5c3.500 4 3.500 10 0 14" stroke="#777" /></Stroke>
          <Stroke size={20} box={22} w={1.600} className="ml-4" label="Wi-Fi"><path d="M1.500 21A19.500 19.500 0 0 1 21 1.500M6.500 21A14.500 14.500 0 0 1 21 6.500M11.500 21a9.500 9.500 0 0 1 9.500-9.500" /><circle cx="19" cy="19" r="1.800" fill="currentColor" stroke="none" /></Stroke>
          <p className="ml-4 text-center text-[17px] leading-7">12:36 PM<br />4/14/2025</p>
          <button aria-label="Notifications" className="relative ml-8">
            <svg width="24" height="26" viewBox="0 0 24 26" aria-hidden="true"><path d="M0 0h24v19H12v6l-6-6H0z" fill="#fff" /><path d="M4.500 5.500h15M4.500 9.500h15M4.500 13.500h10" stroke="#2a2a2a" strokeWidth="1.500" /></svg>
            <CountBadge>2</CountBadge>
          </button>
          <span className="mr-[7px] ml-[29px] h-[60px] w-px bg-[#777]" />
        </div>
      </div>
    </div>
  );
}

export default function App() {
  return (
    <div className="flex h-screen flex-col overflow-hidden bg-white font-['Open_Sans',sans-serif]">
      <TabStrip />
      <AddressBar />
      <BookmarkBar />
      <div className="flex min-h-0 flex-1">
        <div className="flex min-w-0 flex-1 flex-col">
          <AwsHeader />
          <Breadcrumbs />
          <div className="flex min-h-0 flex-1">
            <Sidebar />
            <Main />
          </div>
          <Footer />
        </div>
        <ScrollBar>
          <span className="h-full w-[13px] rounded-full bg-[#8b8b8b]" />
        </ScrollBar>
      </div>
      <Taskbar />
    </div>
  );
}
